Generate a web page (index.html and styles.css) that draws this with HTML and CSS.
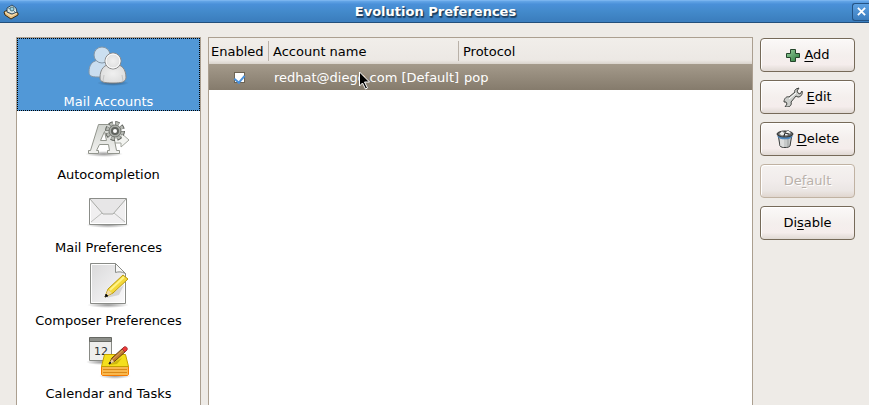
FILE: index.html
```html
<!DOCTYPE html>
<html lang="en">
<head>
  <meta charset="UTF-8" />
  <meta name="viewport" content="width=device-width, initial-scale=1.0"/>
  <title>Evolution Preferences</title>
  <link rel="stylesheet" href="styles.css">
</head>
<body>

  <!-- Shared gradients -->
  <svg class="defs" width="0" height="0" aria-hidden="true">
    <defs>
      <linearGradient id="paper" x1="0" y1="0" x2="1" y2="1">
        <stop offset="0" stop-color="#d9d9da"/>
        <stop offset="1" stop-color="#fbfafb"/>
      </linearGradient>
      <linearGradient id="metal" x1="0" y1="0" x2="0" y2="1">
        <stop offset="0" stop-color="#d0d3ce"/>
        <stop offset="1" stop-color="#f2f2f0"/>
      </linearGradient>
      <radialGradient id="white">
        <stop offset="0" stop-color="#f0f0f0"/>
        <stop offset="1" stop-color="#dedede"/>
      </radialGradient>
      <radialGradient id="shade">
        <stop offset="0" stop-color="#000" stop-opacity="0.4"/>
        <stop offset="1" stop-color="#000" stop-opacity="0"/>
      </radialGradient>
      <linearGradient id="green" x1="0" y1="0" x2="1" y2="1">
        <stop offset="0" stop-color="#9bd0a0"/>
        <stop offset="1" stop-color="#28793a"/>
      </linearGradient>
    </defs>
  </svg>

  <header class="titlebar">
    <svg class="app-icon" viewBox="0 0 16 16" aria-hidden="true">
      <path d="M1 8l5-3 9 4v2l-7 4-6-4z" fill="#e4bf83" stroke="#3c2c12"/>
      <path d="M2 8l6 4 6-3" fill="none" stroke="#fbe6bb"/>
      <path d="M4 4l5-3 4 3 1 4-5 2-5-2z" fill="#dbe7e4" stroke="#2f4a60"/>
      <path d="M5 4l4 1 3 3" fill="none" stroke="#5b88a3"/>
      <circle cx="9" cy="5" r="2" fill="#9fd3e3" stroke="#49727c"/>
    </svg>
    <h1>Evolution Preferences</h1>
    <button class="close" type="button" aria-label="Close">
      <svg viewBox="0 0 10 10"><path d="M1 1l8 8M9 1l-8 8"/></svg>
    </button>
  </header>

  <main class="content">
    <nav class="sidebar">
      <a class="item selected" href="#accounts">
        <svg viewBox="0 0 48 48" aria-hidden="true">
          <g stroke="#8496a5">
            <path d="M5 31c0-7 3-12 12-12s12 5 12 12c-1 4-4 5-12 5S5 36 5 31z" fill="#c9ddef"/>
            <circle cx="18" cy="14" r="8" fill="#cbdff0"/>
          </g>
          <ellipse cx="29" cy="42" rx="16" ry="3" fill="url(#shade)"/>
          <path d="M16 37c0-9 4-14 13-14s13 5 13 14c-1 4-4 5-13 5s-13-1-13-5z" fill="url(#white)" stroke="#898989"/>
          <path d="M20 34l-1 6M38 34l1 6" stroke="#c4c4c4"/>
          <circle cx="29" cy="20" r="8" fill="url(#white)" stroke="#898989"/>
          <circle cx="29" cy="20" r="7" fill="none" stroke="#fff"/>
        </svg>
        <span>Mail Accounts</span>
      </a>
      <a class="item" href="#autocompletion">
        <svg viewBox="0 0 48 48" aria-hidden="true">
          <ellipse cx="20" cy="40" rx="19" ry="3" fill="url(#shade)"/>
          <path d="M29 24h8v-5l8 7-8 7v-4h-8z" fill="#f3f4f1" stroke="#a3a69e"/>
          <path fill-rule="evenodd" d="M14.500 10.500h13l5 26h3v3h-12v-3h2l-1-6h-9l-3 6h2v3h-10v-3h2zM20.500 17.500l-4 9h6z" fill="url(#metal)" stroke="#92958d"/>
          <circle cx="31" cy="17" r="8" fill="none" stroke="#5b5e59" stroke-width="4" stroke-dasharray="4 2.283"/>
          <circle cx="31" cy="17" r="7.500" fill="none" stroke="#b6b9b3" stroke-width="3" stroke-dasharray="3 2.890" stroke-dashoffset="-.5"/>
          <circle cx="31" cy="17" r="6" fill="#a9aca7" stroke="#72756f"/>
          <circle cx="31" cy="17" r="3" fill="#fff" stroke="#60635e" stroke-width="2"/>
        </svg>
        <span>Autocompletion</span>
      </a>
      <a class="item" href="#mail">
        <svg viewBox="0 0 48 48" aria-hidden="true">
          <ellipse cx="24" cy="38" rx="22" ry="3" fill="url(#shade)"/>
          <path d="M5.500 11.500h37v26h-37z" fill="#f0eff0" stroke="#8b8d89"/>
          <path d="M6.500 12.500h35v24h-35z" fill="none" stroke="#fff"/>
          <path d="M7 35l11-9M41 35l-11-9" stroke="#bcbdbb"/>
          <path d="M6 12l13 15h10l13-15z" fill="#e7e6e7"/>
          <path d="M6 12l13 15h10l13-15" fill="none" stroke="#a8aaa6"/>
        </svg>
        <span>Mail Preferences</span>
      </a>
      <a class="item" href="#composer">
        <svg viewBox="0 0 48 48" aria-hidden="true">
          <ellipse cx="24" cy="45" rx="21" ry="3" fill="url(#shade)"/>
          <path d="M6.500 3.500h25l10 10v30h-35z" fill="url(#paper)" stroke="#898b87"/>
          <path d="M7.500 4.500h24M7.500 5v37.500h33V14" fill="none" stroke="#fff"/>
          <path d="M31.500 3.500v9c3-1 6-1 10 1z" fill="#f8f8f8" stroke="#898b87"/>
          <path d="M22 38l18-13-5 10z" fill="#000" opacity="0.12"/>
          <path d="M21 37l3-8 15-14 5 4-15 14z" fill="#f4d93b" stroke="#bb9a0d"/>
          <path d="M26 30l14-13" stroke="#fff387" stroke-width="2"/>
          <path d="M21 37l3-7 4 3z" fill="#f1d8a5"/>
          <path d="M21 37l1-3 2 2z" fill="#000" stroke="#222"/>
        </svg>
        <span>Composer Preferences</span>
      </a>
      <a class="item" href="#calendar">
        <svg viewBox="0 0 48 48" aria-hidden="true">
          <ellipse cx="17" cy="29" rx="15" ry="3" fill="url(#shade)"/>
          <path d="M5.500 5.500h22v22h-22z" fill="#eeeeec" stroke="#888a85"/>
          <path d="M5.500 4.500h22v4h-22z" fill="#8d8f8a" stroke="#666863"/>
          <text x="10" y="22" class="day">12</text>
          <ellipse cx="31" cy="43" rx="16" ry="3" fill="url(#shade)"/>
          <path d="M17.500 33.500h27v8l-1 1h-25l-1-1z" fill="#f9b84e" stroke="#f57900"/>
          <path d="M19 36.500h24M19 39.500h24" stroke="#d98918"/>
          <path d="M20.500 21.500h21l3 12h-27z" fill="#f4df1c" stroke="#c4a000"/>
          <path d="M25 32l13-7-5 6z" fill="#a89000" opacity="0.5"/>
          <path d="M25 31l3-6 11-10 3 3-11 10z" fill="#c17d31" stroke="#653d12"/>
          <path d="M29 26l10-9" stroke="#e0a45b"/>
          <path d="M38 16l2-2c2-1 4 1 3 3l-2 2z" fill="#ef3939" stroke="#a43434"/>
          <path d="M25 31l3-5 2 3z" fill="#ecd19e"/>
          <path d="M25 31l1-2 1 1z" fill="#222" stroke="#222"/>
        </svg>
        <span>Calendar and Tasks</span>
      </a>
    </nav>

    <section class="accounts">
      <table>
        <colgroup>
          <col class="col-enabled">
          <col class="col-name">
          <col>
        </colgroup>
        <thead>
          <tr>
            <th>Enabled</th>
            <th>Account name</th>
            <th>Protocol</th>
          </tr>
        </thead>
        <tbody>
          <tr>
            <td class="check"><input type="checkbox" aria-label="Enable redhat@diego.com" checked></td>
            <td>redhat@diego.com [Default]</td>
            <td>pop</td>
          </tr>
        </tbody>
      </table>
    </section>

    <div class="actions">
      <button type="button">
        <svg class="add-icon" viewBox="0 0 16 16" aria-hidden="true">
          <path d="M5.500 2.500h5v4h4v4h-4v4h-5v-4h-4v-4h4z" fill="url(#green)" stroke="#23442a"/>
        </svg>
        <span><u>A</u>dd</span>
      </button>
      <button type="button">
        <svg class="edit-icon" viewBox="0 0 20 20" aria-hidden="true">
          <path d="M13 2l3-1-2 3 1 2 2 1 2-3c1 3-1 6-4 6l-2-1-5 6c1 3-1 5-4 5l-2 0 2-3-1-2-2 0c0-4 3-6 5-5l6-5c-1-1 0-2 1-3z" fill="#cccecb" stroke="#40423f"/>
          <path d="M6 12l7-6" stroke="#fff"/>
        </svg>
        <span><u>E</u>dit</span>
      </button>
      <button type="button">
        <svg class="trash-icon" viewBox="0 0 18 20" aria-hidden="true">
          <path d="M2 5l2 12c1 2 9 2 10 0l2-12z" fill="#c6c9c9" stroke="#3a3d3d"/>
          <path d="M5 10v7M7 10v8" stroke="#f2f2f2"/>
          <path d="M12 10v7" stroke="#9a9e9e"/>
          <path d="M2 7c3 3 11 3 14 0" fill="none" stroke="#4c86bd" stroke-width="2"/>
          <ellipse cx="9" cy="5" rx="8" ry="3" fill="#5d605f" stroke="#303332"/>
          <path d="M3 5l3-3 3 2 3-3 3 3-5 3-2-1-2 1z" fill="#eceeec" stroke="#888"/>
          <path d="M9 4l-1 3M9 4l4 1" stroke="#222"/>
        </svg>
        <span><u>D</u>elete</span>
      </button>
      <button type="button" disabled><span>De<u>f</u>ault</span></button>
      <button type="button"><span>Di<u>s</u>able</span></button>
    </div>
  </main>

  <!-- Mouse pointer -->
  <svg class="pointer" viewBox="0 0 12 19" aria-hidden="true">
    <path d="M.5 1v14l3-3 3 6 2-1-3-6h5z" fill="#000" stroke="#fff"/>
  </svg>

</body>
</html>
```

FILE: styles.css
```css
* {
  box-sizing: border-box;
  margin: 0;
  padding: 0;
}

body {
  height: 100vh;
  display: flex;
  flex-direction: column;
  overflow: hidden;
  background: #eeebe7;
  color: #000;
  font-family: "DejaVu Sans", sans-serif;
  font-size: 13px;
  line-height: 16px;
}

button {
  font: inherit;
  color: inherit;
}

.defs {
  position: absolute;
}

/* Title bar */
.titlebar {
  flex: none;
  height: 23px;
  display: flex;
  align-items: center;
  padding-left: 3px;
  background: linear-gradient(#65a7e8, #4a90d9 15%, #438acb 50%, #3c7fbf 90%);
  border-top: 1px solid #79b4ef;
  border-bottom: 1px solid #234f7b;
}

.titlebar h1 {
  flex: 1;
  color: #fff;
  font-size: 13px;
  text-align: center;
  text-shadow: 1px 1px 1px #173a5c, 1px 2px 1px #24496d;
}

.app-icon {
  width: 16px;
  height: 16px;
}

.close {
  width: 17px;
  height: 18px;
  display: flex;
  align-items: center;
  justify-content: center;
  background: linear-gradient(#5da1e3, #3b7dbd);
  border: 1px solid #245384;
  border-right: none;
  border-radius: 3px 0 0 3px;
}

.close svg {
  width: 9px;
  height: 9px;
  stroke: #fff;
  stroke-width: 2;
}

/* Window body */
.content {
  flex: 1;
  min-height: 0;
  display: flex;
  gap: 7px;
  padding: 14px 14px 0 16px;
}

.sidebar {
  flex: none;
  width: 185px;
  background: #fff;
  border: 1px solid #ab9f90;
  border-bottom: none;
}

.item {
  height: 73px;
  display: flex;
  flex-direction: column;
  align-items: center;
  gap: 5px;
  padding-top: 3px;
  color: #000;
  text-decoration: none;
}

.item svg {
  width: 48px;
  height: 48px;
  margin-right: 2px;
}

.item.selected {
  background: #5198d7;
  color: #fff;
  outline: 1px dotted #000;
  outline-offset: -1px;
}

.day {
  font-size: 11px;
  fill: #2e3436;
}

/* Account list */
.accounts {
  flex: 1;
  background: #fff;
  border: 1px solid #ab9f90;
  border-bottom: none;
}

.accounts table {
  width: 100%;
  table-layout: fixed;
  border-collapse: collapse;
}

.col-enabled {
  width: 60px;
}

.col-name {
  width: 190px;
}

.accounts th {
  height: 26px;
  padding-top: 2px;
  padding-left: 4px;
  font-weight: normal;
  text-align: left;
  background: linear-gradient(#b9b1a8, #b9b1a8) right center / 1px 20px no-repeat, linear-gradient(#f1eeea, #ece8e4 85%, #d9d3cc);
}

.accounts th:first-child {
  padding-left: 2px;
}

.accounts th:last-child {
  background: linear-gradient(#f1eeea, #ece8e4 85%, #d9d3cc);
}

.accounts tbody tr {
  background: linear-gradient(#a49a8b, #857b6c);
  color: #fff;
}

.accounts td {
  height: 26px;
  padding-top: 2px;
  padding-left: 5px;
  white-space: nowrap;
}

.accounts .check {
  padding: 0;
  text-align: center;
}

.check input {
  appearance: none;
  display: block;
  width: 11px;
  height: 11px;
  margin: 0 auto;
  background: #fff;
  border: 1px solid #6d6353;
}

.check input:checked::before {
  content: "";
  display: block;
  width: 5px;
  height: 8px;
  margin: 0 auto;
  border: solid #4a90d9;
  border-width: 0 2px 2px 0;
  transform: rotate(40deg);
}

/* Buttons */
.actions {
  flex: none;
  width: 95px;
  display: flex;
  flex-direction: column;
  gap: 8px;
  padding-top: 1px;
}

.actions button {
  height: 34px;
  display: flex;
  align-items: center;
  justify-content: center;
  gap: 3px;
  background: linear-gradient(#fbf9f8, #f4efed 50%, #f5edec 80%, #e0d9d4);
  border: 1px solid #766a59;
  border-radius: 4px;
  box-shadow: inset 1px 1px #fff;
}

.actions button:disabled {
  background: linear-gradient(#f5f2f0, #f1eceb 50%, #ebe6e4 80%, #e0d6cf);
  border-color: #c0b2a2;
  color: #b9b1aa;
  text-shadow: 1px 1px #fff;
}

.actions u {
  text-underline-offset: 2px;
}

.add-icon {
  width: 16px;
  height: 16px;
}

.edit-icon {
  width: 20px;
  height: 20px;
}

.trash-icon {
  width: 18px;
  height: 20px;
}

.pointer {
  position: absolute;
  left: 359px;
  top: 71px;
  width: 12px;
  height: 19px;
}
```
